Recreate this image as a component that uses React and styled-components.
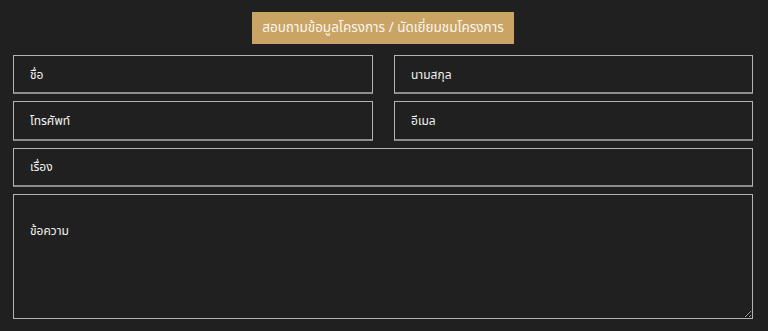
import styled, { createGlobalStyle } from 'styled-components'

const GlobalStyle = createGlobalStyle`
  html, body {
    margin: 0;
    padding: 0;
    background: #202020;
  }
  body {
    font-family: "Noto Sans", "Noto Sans Thai", "DejaVu Sans", sans-serif;
    color: #f2f2f2;
  }
`

const Wrapper = styled.form`
  width: 740px;
  padding: 12px 15px 0 13px;
  display: flex;
  flex-direction: column;
  gap: 7px;
`

const TitleRow = styled.div`
  display: flex;
  justify-content: center;
  margin-bottom: 4px;
`

const Title = styled.div`
  background: #c9a465;
  color: #fbf6ec;
  font-size: 13.5px;
  height: 32px;
  width: 262px;
  display: flex;
  align-items: center;
  justify-content: center;
  white-space: nowrap;
`

const Row = styled.div`
  display: grid;
  grid-template-columns: ${p => p.$cols || '1fr'};
  gap: 21px;
`

const Input = styled.input`
  box-sizing: border-box;
  height: 39.4px;
  width: 100%;
  background: #202020;
  border: 1px solid #b4b4b4;
  border-bottom: 2px solid #8c8c8c;
  color: #f2f2f2;
  font-family: inherit;
  font-size: 12px;
  padding: 0 16px;
  outline: none;
  &::placeholder {
    color: #f2f2f2;
    opacity: 1;
  }
`

const TextArea = styled.textarea`
  box-sizing: border-box;
  height: 125px;
  width: 100%;
  background: #202020;
  border: 1px solid #b4b4b4;
  color: #f2f2f2;
  font-family: inherit;
  font-size: 12px;
  padding: 27px 16px;
  outline: none;
  resize: vertical;
  display: block;
  &::placeholder {
    color: #f2f2f2;
    opacity: 1;
  }
`

export default function App () {
  return (
    <>
      <GlobalStyle />
      <Wrapper>
        <TitleRow>
          <Title>สอบถามข้อมูลโครงการ / นัดเยี่ยมชมโครงการ</Title>
        </TitleRow>
        <Row $cols='360px 359px'>
          <Input placeholder='ชื่อ' />
          <Input placeholder='นามสกุล' />
        </Row>
        <Row $cols='360px 359px'>
          <Input placeholder='โทรศัพท์' />
          <Input placeholder='อีเมล' />
        </Row>
        <Row>
          <Input placeholder='เรื่อง' />
        </Row>
        <Row>
          <TextArea placeholder='ข้อความ' />
        </Row>
      </Wrapper>
    </>
  )
}
